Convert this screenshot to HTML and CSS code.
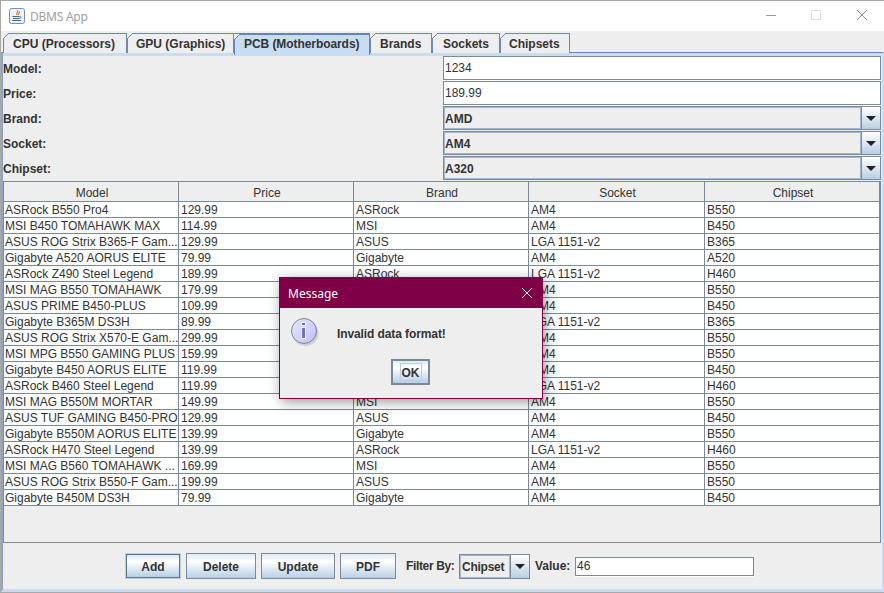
FILE: index.html
```html
<!DOCTYPE html>
<html lang="en">
<head>
<meta charset="utf-8">
<title>DBMS App</title>
<link rel="stylesheet" href="styles.css">
</head>
<body>
<div class="window">
  <header class="titlebar">
    <svg class="appicon" width="16" height="16" viewBox="0 0 16 16">
      <rect x="0.5" y="0.5" width="15" height="15" rx="2" fill="#eef3f9" stroke="#6d93b6"/>
      <path d="M8.5 2c1.5 2-2 3-.5 5M10.5 3.5c.5 1.5-2 2-1 3.5" fill="none" stroke="#e07a30" stroke-width="1.2"/>
      <path d="M3.5 8.5h7M4 10.5h6M3 12.5h9" fill="none" stroke="#3d6a94" stroke-width="1"/>
      <path d="M10.5 8.5c2 0 2 1.6-.5 2" fill="none" stroke="#3d6a94"/>
    </svg>
    <span class="apptitle">DBMS App</span>
    <div class="winctrls">
      <svg width="12" height="12" viewBox="0 0 12 12"><path d="M2 6.5h10" stroke="#9a9a9a"/></svg>
      <svg width="12" height="12" viewBox="0 0 12 12"><rect x="1.5" y="1.5" width="9" height="9" fill="none" stroke="#e0e0e0"/></svg>
      <svg width="12" height="12" viewBox="0 0 12 12"><path d="M1 1l10 10M11 1L1 11" stroke="#8a8a8a"/></svg>
    </div>
  </header>
  <nav class="tabs">
    <div class="tab t1">CPU (Processors)</div>
    <div class="tab t2">GPU (Graphics)</div>
    <div class="tab t3 active">PCB (Motherboards)</div>
    <div class="tab t4">Brands</div>
    <div class="tab t5">Sockets</div>
    <div class="tab t6">Chipsets</div>
  </nav>
  <main class="panel">
    <section class="form">
      <label class="lbl">Model:</label><div class="field">1234</div>
      <label class="lbl">Price:</label><div class="field">189.99</div>
      <label class="lbl">Brand:</label><div class="combo"><span class="cval">AMD</span><span class="carrow"><i></i></span></div>
      <label class="lbl">Socket:</label><div class="combo"><span class="cval">AM4</span><span class="carrow"><i></i></span></div>
      <label class="lbl">Chipset:</label><div class="combo"><span class="cval">A320</span><span class="carrow"><i></i></span></div>
    </section>
    <section class="scroll">
      <table class="grid">
        <colgroup><col class="c1"><col class="c2"><col class="c3"><col class="c4"><col class="c5"></colgroup>
        <thead><tr><th>Model</th><th>Price</th><th>Brand</th><th>Socket</th><th>Chipset</th></tr></thead>
        <tbody>
          <tr><td>ASRock B550 Pro4</td><td>129.99</td><td>ASRock</td><td>AM4</td><td>B550</td></tr>
          <tr><td>MSI B450 TOMAHAWK MAX</td><td>114.99</td><td>MSI</td><td>AM4</td><td>B450</td></tr>
          <tr><td>ASUS ROG Strix B365-F Gam...</td><td>129.99</td><td>ASUS</td><td>LGA 1151-v2</td><td>B365</td></tr>
          <tr><td>Gigabyte A520 AORUS ELITE</td><td>79.99</td><td>Gigabyte</td><td>AM4</td><td>A520</td></tr>
          <tr><td>ASRock Z490 Steel Legend</td><td>189.99</td><td>ASRock</td><td>LGA 1151-v2</td><td>H460</td></tr>
          <tr><td>MSI MAG B550 TOMAHAWK</td><td>179.99</td><td>MSI</td><td>AM4</td><td>B550</td></tr>
          <tr><td>ASUS PRIME B450-PLUS</td><td>109.99</td><td>ASUS</td><td>AM4</td><td>B450</td></tr>
          <tr><td>Gigabyte B365M DS3H</td><td>89.99</td><td>Gigabyte</td><td>LGA 1151-v2</td><td>B365</td></tr>
          <tr><td>ASUS ROG Strix X570-E Gam...</td><td>299.99</td><td>ASUS</td><td>AM4</td><td>B550</td></tr>
          <tr><td>MSI MPG B550 GAMING PLUS</td><td>159.99</td><td>MSI</td><td>AM4</td><td>B550</td></tr>
          <tr><td>Gigabyte B450 AORUS ELITE</td><td>119.99</td><td>Gigabyte</td><td>AM4</td><td>B450</td></tr>
          <tr><td>ASRock B460 Steel Legend</td><td>119.99</td><td>ASRock</td><td>LGA 1151-v2</td><td>H460</td></tr>
          <tr><td>MSI MAG B550M MORTAR</td><td>149.99</td><td>MSI</td><td>AM4</td><td>B550</td></tr>
          <tr><td>ASUS TUF GAMING B450-PRO</td><td>129.99</td><td>ASUS</td><td>AM4</td><td>B450</td></tr>
          <tr><td>Gigabyte B550M AORUS ELITE</td><td>139.99</td><td>Gigabyte</td><td>AM4</td><td>B550</td></tr>
          <tr><td>ASRock H470 Steel Legend</td><td>139.99</td><td>ASRock</td><td>LGA 1151-v2</td><td>H460</td></tr>
          <tr><td>MSI MAG B560 TOMAHAWK ...</td><td>169.99</td><td>MSI</td><td>AM4</td><td>B550</td></tr>
          <tr><td>ASUS ROG Strix B550-F Gam...</td><td>199.99</td><td>ASUS</td><td>AM4</td><td>B550</td></tr>
          <tr><td>Gigabyte B450M DS3H</td><td>79.99</td><td>Gigabyte</td><td>AM4</td><td>B450</td></tr>
        </tbody>
      </table>
    </section>
    <section class="actions">
      <button class="btn b-add">Add</button>
      <button class="btn b-del">Delete</button>
      <button class="btn b-upd">Update</button>
      <button class="btn b-pdf">PDF</button>
      <span class="blabel l-filter">Filter By:</span>
      <div class="combo small"><span class="cval">Chipset</span><span class="carrow"><i></i></span></div>
      <span class="blabel l-value">Value:</span>
      <div class="field valuefield">46</div>
    </section>
  </main>
  <div class="dialog">
    <div class="dlgtitle">
      <span>Message</span>
      <svg width="12" height="12" viewBox="0 0 12 12"><path d="M1 1l10 10M11 1L1 11" stroke="#fff" stroke-width="1"/></svg>
    </div>
    <div class="dlgbody">
      <svg class="infoicon" width="30" height="30" viewBox="0 0 30 30">
        <defs><linearGradient id="ig" x1="0" y1="0" x2="1" y2="1"><stop offset="0" stop-color="#e6e6ff"/><stop offset="1" stop-color="#c0c0f4"/></linearGradient></defs>
        <circle cx="14.5" cy="15" r="13" fill="#9a9a9a" opacity=".35"/>
        <circle cx="13" cy="13" r="12.5" fill="url(#ig)" stroke="#8080a8"/>
        <rect x="10.5" y="4.5" width="4" height="3" fill="#7474ae" stroke="#eeeeff"/>
        <rect x="10.5" y="9.5" width="4" height="11" fill="#7474ae" stroke="#eeeeff"/>
      </svg>
      <p class="dlgmsg">Invalid data format!</p>
    </div>
    <div class="dlgfoot"><button class="okbtn"><span>OK</span></button></div>
  </div>
</div>
</body>
</html>
```
FILE: styles.css
```css
* { box-sizing: border-box; }
html, body { margin: 0; padding: 0; height: 100%; overflow: hidden; }
body { font: 12px "Liberation Sans", Arial, sans-serif; color: #333; background: #eee; }

.window { position: relative; display: flex; flex-direction: column; width: 884px; height: 593px; background: #eee; border-top: 1px solid #a8a8a8; border-left: 1px solid #a8a8a8; border-bottom: 1px solid #a8a8a8; }

.titlebar { display: flex; align-items: center; height: 30px; flex: none; background: #fff; padding-left: 8px; }
.appicon { margin-right: 5px; }
.apptitle { font: 12px "Noto Sans", "Open Sans", sans-serif; letter-spacing: -.25px; color: #a0a0a0; }
.winctrls { margin-left: auto; display: flex; gap: 34px; padding: 0 16px 2px 0; }

.tabs { display: flex; height: 21px; flex: none; padding: 2px 0 0 2px; background: #eee; }
.tab { position: relative; height: 20px; padding-top: 3px; font-weight: bold; color: #333; border: 1px solid #6f88ad; border-bottom: 0; background: #eee; text-align: left; white-space: nowrap; }
.tab::before { content: ""; position: absolute; left: -1px; top: -1px; width: 6px; height: 6px; background: linear-gradient(135deg, #eee 0 48%, #6f88ad 48% 58%, transparent 58%); }
.t1 { width: 124px; padding-left: 9px; }
.t2 { width: 107px; padding-left: 8px; }
.t3 { width: 136px; padding-left: 9px; letter-spacing: -.07px; }
.t4 { width: 62px; padding-left: 9px; }
.t5 { width: 68px; padding-left: 10px; }
.t6 { width: 70px; padding-left: 8px; }
.tab.active { background: #c8ddf2; border-color: #6382bf; border-top-width: 2px; padding-top: 2px; height: 22px; z-index: 2; margin-bottom: -2px; }

.panel { flex: 1; min-height: 0; display: flex; flex-direction: column; background: #eee; border-top: 1px solid #6382bf; border-left: 2px solid #8aa5d0; border-right: 2px solid #c8ddf2; border-bottom: 3px solid #c8ddf2; box-shadow: inset 0 3px 0 #c8ddf2; padding: 3px 1px 0 0; }

.form { display: grid; grid-template-columns: 440px 1fr; grid-auto-rows: 25px; height: 125px; flex: none; }
.lbl { font-weight: bold; display: flex; align-items: center; }
.field { display: flex; align-items: center; padding-left: 1px; height: 24px; background: #fff; color: #333; border: 1px solid #7a8a99; box-shadow: 0 1px 0 #fff; }
.combo { display: flex; height: 24px; border: 1px solid #7a8a99; background: #eee; font-weight: bold; }
.cval { flex: 1; display: flex; align-items: center; padding: 1px 0 0; border: 1px solid #a3b8cc; background: #eee; }
.carrow { width: 19px; flex: none; display: flex; align-items: center; justify-content: center; border-left: 1px solid #7a8a99; background: linear-gradient(#fff, #b8cfe5); }
.carrow i { display: block; width: 0; height: 0; border-left: 5px solid transparent; border-right: 5px solid transparent; border-top: 5px solid #222; }

.scroll { height: 362px; flex: none; border: 1px solid #7a8a99; background: #eee; }
.grid { border-collapse: separate; border-spacing: 0; table-layout: fixed; width: 876px; font-size: 12px; }
.c1, .c2, .c3, .c5 { width: 175px; }
.c4 { width: 176px; }
.grid th { height: 20px; padding: 2px 0 0 2px; font-weight: normal; background: #eee; color: #333; border-right: 1px solid #7a8a99; border-bottom: 1px solid #7a8a99; }
.grid td { height: 16px; padding: 1px 0 0 1px; background: #fff; color: #333; line-height: 14px; white-space: nowrap; overflow: hidden; border-right: 1px solid #7a8a99; border-bottom: 1px solid #7a8a99; }
.grid td:not(:first-child) { padding-left: 2px; }

.actions { flex: 1; display: flex; align-items: center; padding-left: 123px; }
.btn { height: 26px; padding: 1px 0 0; font: bold 12px "Liberation Sans", Arial, sans-serif; color: #333; border: 1px solid #7a8a99; background: linear-gradient(#dde8f3, #fff 30%, #b8cfe5); }
.b-add { width: 54px; height: 24px; margin-right: 6px; outline: 1px solid #b8cfe5; border-color: #5f7488; }
.b-del { width: 70px; margin-right: 5px; }
.b-upd { width: 74px; margin-right: 5px; }
.b-pdf { width: 56px; margin-right: 10px; }
.blabel { font-weight: bold; }
.l-filter { width: 53px; letter-spacing: -.35px; white-space: nowrap; }
.combo.small { width: 71px; height: 25px; margin-right: 5px; }
.combo.small .cval { padding-left: 1px; letter-spacing: -.25px; }
.combo.small .carrow { width: 19px; }
.l-value { width: 40px; }
.valuefield { width: 179px; height: 19px; }

.dialog { position: absolute; left: 278px; top: 276px; width: 264px; height: 122px; background: #eee; border: 1px solid #7f0046; box-shadow: 2px 3px 12px rgba(0,0,0,.4); display: flex; flex-direction: column; }
.dlgtitle { height: 30px; flex: none; background: #7f0046; color: #fff; display: flex; align-items: center; justify-content: space-between; padding: 0 9px 0 8px; font: 12px "Noto Sans", "Open Sans", sans-serif; }
.dlgbody { display: flex; align-items: flex-start; padding: 10px 0 0 11px; height: 51px; flex: none; }
.infoicon { margin-right: 16px; }
.dlgmsg { margin: 0; padding-top: 9px; font-weight: bold; letter-spacing: -.1px; color: #333; }
.dlgfoot { display: flex; padding-left: 111px; }
.okbtn { width: 39px; height: 26px; padding: 0; border: 2px solid #7a8a99; background: linear-gradient(#dde8f3, #fff 30%, #b8cfe5); font: bold 12px "Liberation Sans", Arial, sans-serif; color: #333; display: flex; align-items: center; justify-content: center; }
.okbtn span { border: 1px solid #b8cfe5; padding: 2px 1px 0; line-height: 14px; }
```
